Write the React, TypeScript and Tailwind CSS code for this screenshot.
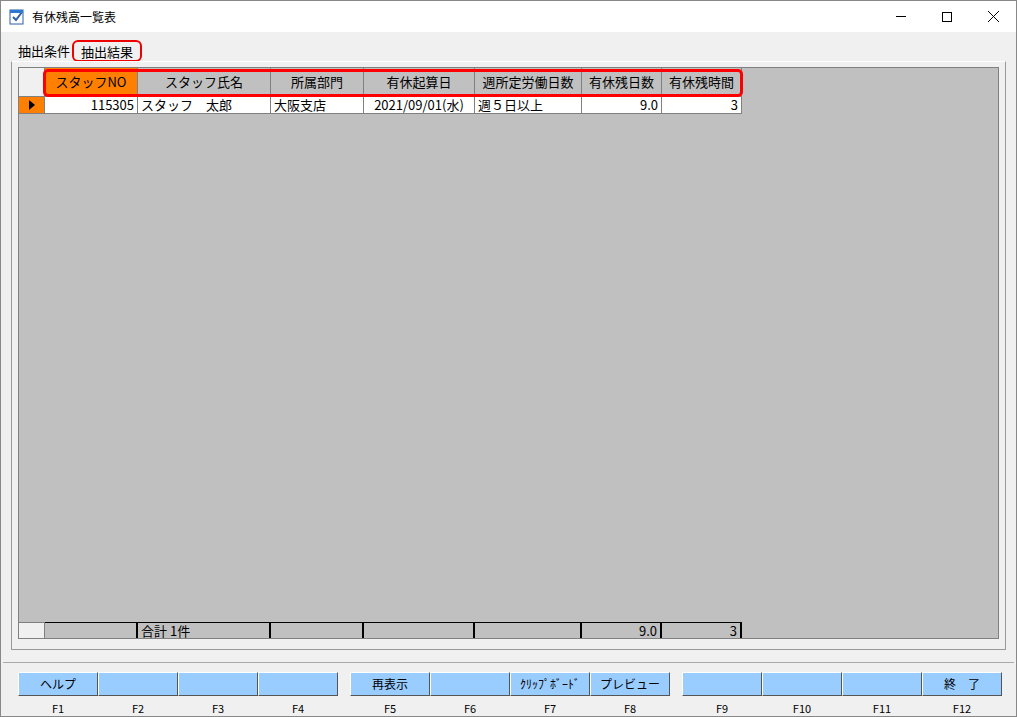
export default function App() {
  const cols = [
    { t: "スタッフNO", w: "w-[93px]" },
    { t: "スタッフ氏名", w: "w-[133px]" },
    { t: "所属部門", w: "w-[93px]" },
    { t: "有休起算日", w: "w-[111px]" },
    { t: "週所定労働日数", w: "w-[107px]" },
    { t: "有休残日数", w: "w-[80px]" },
    { t: "有休残時間", w: "w-[80px]" },
  ];
  const row = ["115305", "スタッフ　太郎", "大阪支店", "2021/09/01(水)", "週５日以上", "9.0", "3"];
  const align = ["text-right", "text-left", "text-left", "text-center", "text-left", "text-right", "text-right"];
  const foot = ["", "合計 1件", "", "", "", "9.0", "3"];
  const groups = [
    [["ヘルプ", "F1"], ["", "F2"], ["", "F3"], ["", "F4"]],
    [["再表示", "F5"], ["", "F6"], ["ｸﾘｯﾌﾟﾎﾞｰﾄﾞ", "F7"], ["プレビュー", "F8"]],
    [["", "F9"], ["", "F10"], ["", "F11"], ["終　了", "F12"]],
  ];
  return (
    <div className="w-[1017px] h-[717px] bg-[#f0f0f0] border border-[#888] flex flex-col text-[13px] text-black" style={{ fontFamily: '"Noto Sans CJK JP", "Liberation Sans", sans-serif' }}>
      <div className="h-[31px] bg-white flex items-center shrink-0">
        <svg width="16" height="16" viewBox="0 0 16 16" className="ml-[8px]">
          <rect x="1" y="1" width="13" height="14" fill="#fff" stroke="#2b5fa8" />
          <path d="M4 8 L7 11 L13 3" stroke="#2b5fa8" strokeWidth="2" fill="none" />
          <rect x="1" y="1" width="13" height="3" fill="#2b78d0" />
        </svg>
        <span className="ml-[7px] text-[12px]">有休残高一覧表</span>
        <div className="ml-auto flex h-full">
          <div className="w-[46px] flex items-center justify-center"><div className="w-[10px] h-px bg-black" /></div>
          <div className="w-[46px] flex items-center justify-center"><div className="w-[10px] h-[10px] border border-black" /></div>
          <div className="w-[46px] flex items-center justify-center">
            <svg width="11" height="11" viewBox="0 0 11 11"><path d="M0 0L11 11M11 0L0 11" stroke="#000" /></svg>
          </div>
        </div>
      </div>
      <div className="flex items-end h-[29px] pl-[12px] shrink-0">
        <div className="px-[5px] h-[21px] leading-[21px]">抽出条件</div>
        <div className="px-[7px] h-[22px] leading-[20px] border-2 border-[#e00] rounded-[6px] bg-[#f0f0f0] -ml-[3px] mb-[-1px]">抽出結果</div>
      </div>
      <div className="mx-[10px] border border-[#999] border-t-[#fff] h-[589px] shrink-0 p-[6px] pt-[5px] pb-[10px]">
        <div className="h-full bg-[#c0c0c0] border border-[#808080] flex flex-col">
          <div className="flex h-[29px] relative">
            <div className="w-[26px] bg-[#f0f0f0] border-r border-b border-[#808080]" />
            {cols.map((c, i) => (
              <div key={i} className={`${c.w} flex items-center justify-center border-r border-b border-[#808080] ${i === 0 ? "bg-[#ff8000]" : "bg-[#c0c0c0]"}`}>{c.t}</div>
            ))}
            <div className="absolute left-[24px] top-[1px] w-[700px] h-[28px] border-[3px] border-[#f00] rounded-[5px]" />
          </div>
          <div className="flex h-[17px] leading-[16px]">
            <div className="w-[26px] bg-[#ff8000] border-r border-b border-[#808080] flex items-center justify-center">
              <svg width="6" height="10" viewBox="0 0 6 10"><path d="M0 0L6 5L0 10Z" fill="#000" /></svg>
            </div>
            {cols.map((c, i) => (
              <div key={i} className={`${c.w} bg-white border-r border-b border-[#808080] px-[3px] ${align[i]}`}>{row[i]}</div>
            ))}
          </div>
          <div className="flex-1" />
          <div className="flex h-[16px] leading-[15px]">
            <div className="w-[26px] bg-[#f0f0f0] border-r border-t border-[#808080]" />
            {cols.map((c, i) => (
              <div key={i} className={`${c.w} border-r-2 border-t border-r-black border-t-black px-[3px] ${i >= 5 ? "text-right" : "text-left"}`}>{foot[i]}</div>
            ))}
          </div>
        </div>
      </div>
      <div className="mt-[12px] mx-[2px] flex-1 border-t border-[#aaa] pt-[9px] pl-[15px] flex gap-[12px] text-[12px]">
        {groups.map((g, gi) => (
          <div key={gi} className="flex">
            {g.map(([t, f]) => (
              <div key={f} className="w-[80px] flex flex-col items-center">
                <div className="w-[80px] h-[24px] bg-[#99ccff] border border-t-white border-l-white border-b-[#555] border-r-[#555] flex items-center justify-center">{t}</div>
                <div className="mt-[4px] text-[11px]">{f}</div>
              </div>
            ))}
          </div>
        ))}
      </div>
    </div>
  );
}
